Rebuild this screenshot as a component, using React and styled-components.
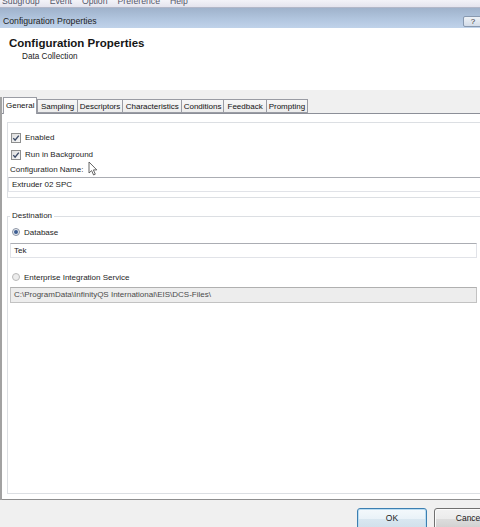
import React from 'react';
import styled, { createGlobalStyle } from 'styled-components';

const GlobalStyle = createGlobalStyle`
  html, body {
    margin: 0;
    padding: 0;
    background: #f0f0f0;
  }
  body {
    font-family: "Liberation Sans", Arial, sans-serif;
    color: #1b1b1b;
  }
`;

const Screen = styled.div`
  position: relative;
  width: 480px;
  height: 527px;
  overflow: hidden;
  background: #f0f0f0;
`;

const Dialog = styled.div`
  width: 510px;
  display: flex;
  flex-direction: column;
`;

const MenuBar = styled.div`
  height: 7px;
  overflow: hidden;
  background: linear-gradient(#f3f3f8, #e4e4ee);
  border-bottom: 1px solid #b2b7c8;
`;

const MenuItems = styled.div`
  display: flex;
  gap: 10px;
  padding-left: 2px;
  margin-top: -5px;
  font-size: 8.7px;
  line-height: 12px;
  color: #55586a;
`;

const TitleBar = styled.div`
  height: 20px;
  box-sizing: border-box;
  padding: 6px 27px 0 3px;
  display: flex;
  align-items: center;
  justify-content: space-between;
  background: linear-gradient(#9fb2cb, #b3c7e0 60%, #c0d3ea);
  font-size: 8.7px;
  color: #1e1e24;
`;

const HelpButton = styled.div`
  width: 20px;
  height: 11px;
  box-sizing: border-box;
  border: 1px solid #8899b0;
  border-radius: 2px;
  background: linear-gradient(#eef2f7, #d3dce8);
  font-size: 8px;
  line-height: 9px;
  text-align: center;
  color: #333;
`;

const Header = styled.div`
  height: 62px;
  box-sizing: border-box;
  padding: 8px 0 0 9px;
  background: #fff;
`;

const HeaderTitle = styled.div`
  font-size: 11.5px;
  font-weight: bold;
  line-height: 14px;
  color: #161616;
`;

const HeaderSub = styled.div`
  margin: 2px 0 0 13px;
  font-size: 8.2px;
  line-height: 10px;
  color: #222;
`;

const Body = styled.div`
  padding-top: 7px;
`;

const TabArea = styled.div`
  border-left: 2px solid #a2a2a2;
`;

const TabStrip = styled.div`
  height: 16px;
  padding-left: 1px;
  display: flex;
  align-items: flex-end;
`;

const Tab = styled.div`
  position: relative;
  z-index: ${(p) => (p.$active ? 1 : 0)};
  height: ${(p) => (p.$active ? 17 : 14)}px;
  margin-bottom: ${(p) => (p.$active ? -1 : 0)}px;
  margin-right: ${(p) => (p.$active ? 0 : -1)}px;
  box-sizing: border-box;
  padding: 0 ${(p) => p.$pad}px;
  border: 1px solid #9a9ca4;
  border-bottom: ${(p) => (p.$active ? 'none' : '1px solid #9a9ca4')};
  background: ${(p) => (p.$active ? '#fff' : 'linear-gradient(#f7f7f7, #ececec)')};
  font-size: 8px;
  line-height: ${(p) => (p.$active ? 15 : 13)}px;
  color: #111;
  white-space: nowrap;
`;

const Panel = styled.div`
  height: 387px;
  box-sizing: border-box;
  border-top: 1px solid #8c8f98;
  border-bottom: 1px solid #8e8e8e;
  background: #fff;
  display: flex;
  flex-direction: column;
`;

const GroupBox = styled.div`
  margin: 8px 5px 0 5px;
  padding: 6px 0 5px 0;
  border: 1px solid #dcdfe3;
`;

const OptionRow = styled.div`
  height: ${(p) => p.$h || 17}px;
  margin-top: ${(p) => p.$top || 0}px;
  padding-left: ${(p) => p.$indent}px;
  display: flex;
  align-items: center;
  gap: 4px;
  font-size: 8px;
  color: #1e1e1e;
`;

const FieldLabel = styled.div`
  padding-left: 2px;
  font-size: 8px;
  line-height: 14px;
  color: #1e1e1e;
`;

const TextInput = styled.div`
  width: ${(p) => p.$w || 'auto'};
  height: ${(p) => p.$h || 15}px;
  margin: ${(p) => p.$margin || 0};
  box-sizing: border-box;
  padding-left: 3px;
  border: 1px solid ${(p) => (p.$disabled ? '#c2c2c2' : '#e1e3e8')};
  border-top-color: ${(p) => (p.$disabled ? '#b0b0b0' : '#abadb3')};
  background: ${(p) => (p.$disabled ? '#ededed' : '#fff')};
  font-size: 8px;
  line-height: ${(p) => (p.$h || 15) - 2}px;
  color: ${(p) => (p.$disabled ? '#4a4a4a' : '#1a1a1a')};
  white-space: nowrap;
  overflow: hidden;
`;

const FieldSet = styled.fieldset`
  flex: 1;
  min-height: 0;
  min-width: 0;
  margin: 13px 28px 5px 5px;
  padding: 0 0 0 0;
  border: 1px solid #dcdfe3;
`;

const Legend = styled.legend`
  margin-left: 2px;
  padding: 0 2px;
  font-size: 8px;
  line-height: 10px;
  color: #1e1e1e;
`;

const GroupContent = styled.div`
  padding-top: 3px;
  display: flex;
  flex-direction: column;
`;

const ButtonBar = styled.div`
  padding: 8px 6px 0 0;
  display: flex;
  justify-content: flex-end;
  gap: 7px;
`;

const Button = styled.div`
  width: 70px;
  height: 22px;
  box-sizing: border-box;
  border: 1px solid ${(p) => (p.$default ? '#3c7fb1' : '#707070')};
  border-radius: 3px;
  background: ${(p) =>
    p.$default
      ? 'linear-gradient(#f4f9fc, #e9f2f8 50%, #d9e7f0 50%, #cfdfea)'
      : 'linear-gradient(#f2f2f2, #ebebeb 50%, #dddddd 50%, #cfcfcf)'};
  box-shadow: inset 0 0 0 1px ${(p) => (p.$default ? '#b9dcf2' : '#fbfbfb')};
  font-size: 8.5px;
  line-height: 18px;
  text-align: center;
  color: #1a1a1a;
`;

const Cursor = styled.svg`
  position: absolute;
  left: 88px;
  top: 161px;
`;

const CheckBox = () => (
  <svg width="10" height="10" viewBox="0 0 10 10">
    <defs>
      <linearGradient id="cbg" x1="0" y1="0" x2="1" y2="1">
        <stop offset="0" stopColor="#dcdcdc" />
        <stop offset="1" stopColor="#fafafa" />
      </linearGradient>
    </defs>
    <rect x="0.5" y="0.5" width="9" height="9" fill="url(#cbg)" stroke="#8e8f8f" />
    <path d="M2.3 5.1 L4.1 7.2 L7.8 2.6" fill="none" stroke="#3b4a66" strokeWidth="1.4" />
  </svg>
);

const Radio = ({ checked }) => (
  <svg width="8" height="8" viewBox="0 0 8 8">
    <circle cx="4" cy="4" r="3.5" fill={checked ? '#e9edf2' : '#ececec'} stroke={checked ? '#8a93a3' : '#b8b8b8'} />
    {checked && <circle cx="4" cy="4" r="2" fill="#3d5d92" />}
  </svg>
);

const menus = ['Subgroup', 'Event', 'Option', 'Preference', 'Help'];

const tabs = [
  { label: 'General', pad: 2, active: true },
  { label: 'Sampling', pad: 2.5 },
  { label: 'Descriptors', pad: 2 },
  { label: 'Characteristics', pad: 2.5 },
  { label: 'Conditions', pad: 1.5 },
  { label: 'Feedback', pad: 3.5 },
  { label: 'Prompting', pad: 1.5 },
];

export default function App() {
  return (
    <Screen>
      <GlobalStyle />
      <Dialog>
        <MenuBar>
          <MenuItems>
            {menus.map((m) => (
              <span key={m}>{m}</span>
            ))}
          </MenuItems>
        </MenuBar>
        <TitleBar>
          <span>Configuration Properties</span>
          <HelpButton>?</HelpButton>
        </TitleBar>
        <Header>
          <HeaderTitle>Configuration Properties</HeaderTitle>
          <HeaderSub>Data Collection</HeaderSub>
        </Header>
        <Body>
          <TabArea>
            <TabStrip>
              {tabs.map((t) => (
                <Tab key={t.label} $active={t.active} $pad={t.pad}>
                  {t.label}
                </Tab>
              ))}
            </TabStrip>
            <Panel>
              <GroupBox>
                <OptionRow $indent={3}>
                  <CheckBox />
                  <span>Enabled</span>
                </OptionRow>
                <OptionRow $indent={3}>
                  <CheckBox />
                  <span>Run in Background</span>
                </OptionRow>
                <FieldLabel>Configuration Name:</FieldLabel>
                <TextInput>Extruder 02 SPC</TextInput>
              </GroupBox>
              <FieldSet>
                <Legend>Destination</Legend>
                <GroupContent>
                  <OptionRow $indent={4} $h={16}>
                    <Radio checked />
                    <span>Database</span>
                  </OptionRow>
                  <TextInput $w="467px" $margin="3px 0 0 2px">Tek</TextInput>
                  <OptionRow $indent={4} $h={16} $top={11}>
                    <Radio />
                    <span>Enterprise Integration Service</span>
                  </OptionRow>
                  <TextInput $w="467px" $h={16} $margin="2px 0 0 2px" $disabled>
                    C:\ProgramData\InfinityQS International\EIS\DCS-Files\
                  </TextInput>
                </GroupContent>
              </FieldSet>
            </Panel>
          </TabArea>
          <ButtonBar>
            <Button $default>OK</Button>
            <Button>Cancel</Button>
          </ButtonBar>
        </Body>
      </Dialog>
      <Cursor width="11" height="15" viewBox="0 0 11 15">
        <path
          d="M1 1 L1 12 L3.6 9.6 L5.6 14 L7.3 13.2 L5.4 8.9 L8.8 8.9 Z"
          fill="#fff"
          stroke="#555"
          strokeWidth="0.9"
          strokeLinejoin="round"
        />
      </Cursor>
    </Screen>
  );
}
